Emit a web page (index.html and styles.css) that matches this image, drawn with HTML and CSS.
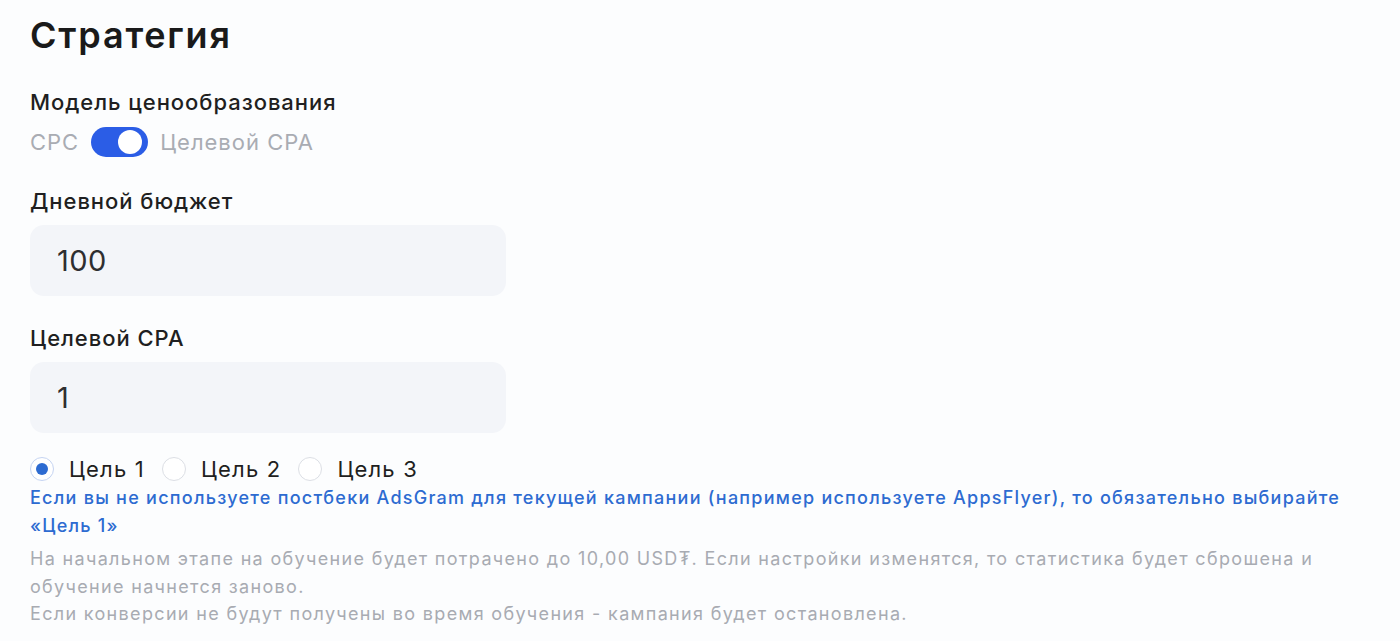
FILE: index.html
```html
<!DOCTYPE html>
<html lang="ru">
<head>
<meta charset="utf-8">
<link rel="stylesheet" href="styles.css">
</head>
<body>
<main class="page">
  <h1 class="title">Стратегия</h1>

  <section class="field">
    <div class="label">Модель ценообразования</div>
    <div class="switch-row">
      <span class="switch-text">CPC</span>
      <span class="switch"><span class="knob"></span></span>
      <span class="switch-text">Целевой CPA</span>
    </div>
  </section>

  <section class="field">
    <div class="label">Дневной бюджет</div>
    <div class="input">100</div>
  </section>

  <section class="field">
    <div class="label">Целевой CPA</div>
    <div class="input">1</div>
  </section>

  <div class="radios">
    <label class="radio"><span class="circle checked"></span>Цель 1</label>
    <label class="radio"><span class="circle"></span>Цель 2</label>
    <label class="radio"><span class="circle"></span>Цель 3</label>
  </div>
  <p class="note-blue">Если вы не используете постбеки AdsGram для текущей кампании (например используете AppsFlyer), то обязательно выбирайте «Цель 1»</p>
  <p class="note-gray">На начальном этапе на обучение будет потрачено до 10,00 USD₮. Если настройки изменятся, то статистика будет сброшена и обучение начнется заново.<br>Если конверсии не будут получены во время обучения - кампания будет остановлена.</p>
</main>
</body>
</html>
```

FILE: styles.css
```css
html, body {
  margin: 0;
  padding: 0;
  background: #fcfdfe;
}
body {
  font-family: Inter, "Noto Sans", sans-serif;
  color: #1c1c1e;
}
.page {
  padding: 12px 30px 0 30px;
  width: 1340px;
}
.title {
  margin: 0;
  font-size: 36px;
  font-weight: 600;
  line-height: 46px;
  letter-spacing: 1.8px;
  color: #1a1a1a;
}
.field {
  margin-top: 30px;
}
.field + .field {
  margin-top: 30px;
}
.field + .field + .field {
  margin-top: 28px;
}
.label {
  font-size: 22px;
  font-weight: 500;
  line-height: 28px;
  letter-spacing: 0.95px;
  color: #1f1f21;
}
.switch-row {
  display: flex;
  align-items: center;
  gap: 12px;
  margin-top: 11px;
}
.switch-text {
  font-size: 22px;
  color: #a9acb3;
  line-height: 30px;
  letter-spacing: 1px;
}
.switch {
  width: 57px;
  height: 30px;
  border-radius: 15px;
  background: #2b5de6;
  display: flex;
  align-items: center;
  justify-content: flex-end;
  padding-right: 6px;
  box-sizing: border-box;
}
.knob {
  width: 24px;
  height: 24px;
  border-radius: 50%;
  background: #ffffff;
}
.input {
  margin-top: 10px;
  width: 476px;
  height: 71px;
  box-sizing: border-box;
  border-radius: 14px;
  background: #f3f5f9;
  padding-left: 27px;
  display: flex;
  align-items: center;
  font-size: 29px;
  letter-spacing: 0.5px;
  color: #2e2e30;
}
.radios {
  display: flex;
  gap: 17px;
  margin-top: 21px;
  height: 30px;
  align-items: center;
}
.radio {
  display: flex;
  align-items: center;
  gap: 15px;
  font-size: 22px;
  letter-spacing: 1.2px;
  color: #1f1f21;
}
.circle {
  width: 24px;
  height: 24px;
  border-radius: 50%;
  box-sizing: border-box;
  border: 1px solid #dcdfe5;
  background: #ffffff;
  position: relative;
}
.circle.checked {
  border-color: #c5d4f2;
}
.circle.checked::after {
  content: "";
  position: absolute;
  left: 5px;
  top: 5px;
  width: 12px;
  height: 12px;
  border-radius: 50%;
  background: #2d6bd1;
}
.note-blue {
  margin: 0;
  font-size: 18px;
  line-height: 28px;
  letter-spacing: 1.25px;
  color: #2d6bd1;
  font-weight: 500;
}
.note-gray {
  margin: 5px 0 0 0;
  font-size: 18px;
  line-height: 27.5px;
  letter-spacing: 1.33px;
  color: #a8abb2;
}
```
